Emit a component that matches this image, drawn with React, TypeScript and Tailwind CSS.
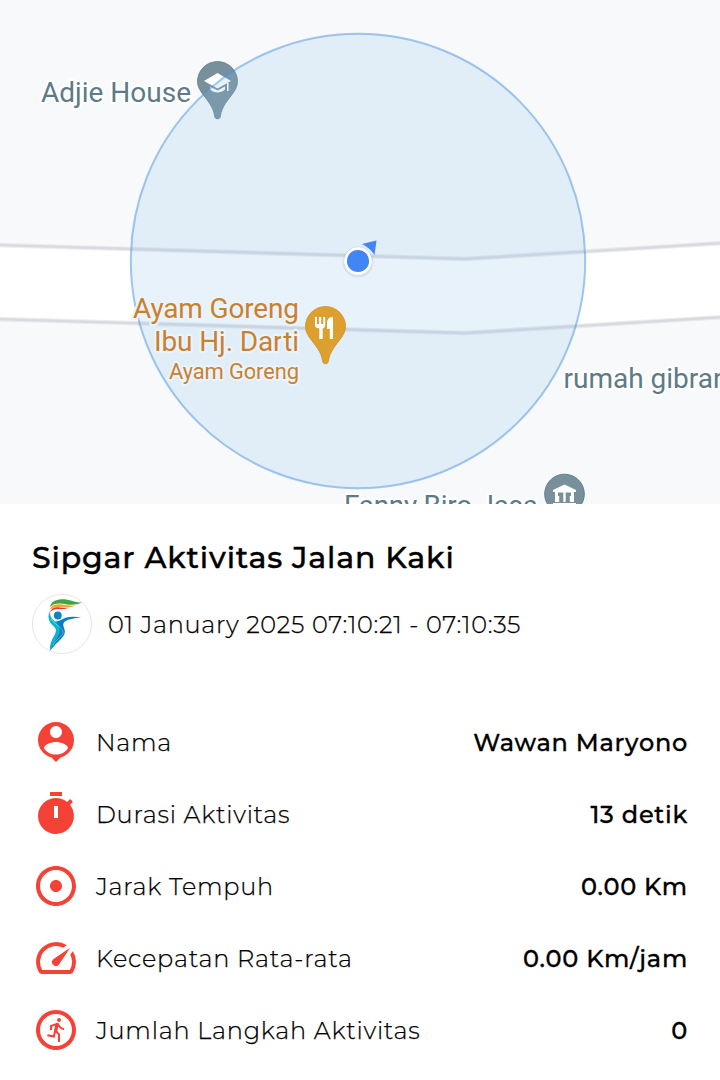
import React from "react";
import { MdAdjust, MdOutlineRunCircle, MdSpeed } from "react-icons/md";

type RowProps = {
  icon: React.ReactNode;
  label: string;
  value: string;
};

const PersonIcon = () => (
  <svg viewBox="0 0 24 24" className="size-12" fill="currentColor">
    <path d="M12 2C7.03 2 3 6.03 3 11c0 4.17 2.84 7.67 6.69 8.69L12 22l2.31-2.31C18.16 18.67 21 15.17 21 11c0-4.97-4.03-9-9-9zm0 2c1.66 0 3 1.34 3 3s-1.34 3-3 3-3-1.34-3-3 1.34-3 3-3zm0 14.3c-2.5 0-4.71-1.28-6-3.22.03-1.99 4-3.08 6-3.08s5.97 1.09 6 3.08a7.2 7.2 0 0 1-6 3.22z" />
  </svg>
);

const TimerIcon = () => (
  <svg viewBox="0 0 24 24" className="size-12" fill="currentColor">
    <path d="M9 1h6v2H9zM19.03 7.39l1.42-1.42c-.43-.51-.9-.99-1.41-1.41l-1.42 1.42A8.96 8.96 0 0 0 12 4c-4.97 0-9 4.03-9 9s4.02 9 9 9a8.99 8.99 0 0 0 7.03-14.61zM13 14h-2V8h2v6z" />
  </svg>
);

const Logo = () => (
  <svg viewBox="0 0 60 60" className="size-15 shrink-0">
    <circle cx="30" cy="30" r="29.6" fill="#fff" stroke="#dedede" strokeWidth=".8" />
    <path d="M18 13C19 7 25 5 32 5.200c7 .5 11 3.500 18 3.300-7 3.500-14 2-20 1.200-6-.5-9 .5-12 3.300z" fill="#43a447" />
    <path d="M18 15.500c1.500-5 7-5.500 12-5 5 .6 8 1.500 13 1-5 3-10 1.500-15 1.500-5-.3-7 .5-10 2.500z" fill="#f5a52a" />
    <path d="M18 18c1.500-4.500 6-5 10-4.600 3 .2 5 .8 8 .8-4 1.500-7 .6-10.500.8-3 0-5.500 1-7.500 3z" fill="#e53935" />
    <path d="M18 17c-3 6-1.500 11 4 15.500 3 3 2 6 0 9.500-2.500 4.500-4.500 8.500-4 15 2-6 8-10.500 11-15.500 3-5 2-8.500-3-12-5.500-3.500-8.500-6.500-8-12.500z" fill="#08b7cb" />
    <path d="M23 27.500c4 0 6.500-2.500 10.500-3.800 5-1.300 10-1.300 16 .1-6 .2-12.500.9-17 3.900-2.500 2.500-.5 5.500.3 8.500 1 7-6.800 10-14.800 20.500 2-6 5-9.500 8-14.500 3-5.500 2-10.500-3-14.700z" fill="#087fc0" />
    <circle cx="25.800" cy="21.500" r="3.900" fill="#0d83c5" />
    <path d="M19 25c3 5 12 8.500 12 13.500 0 4-8 7.500-10 13" fill="none" stroke="#fff" strokeOpacity=".6" strokeWidth=".6" />
  </svg>
);

const PIN =
  "M0-20.500A20 20 0 0 0-20-.5C-20 9-11 15-5.800 25-3.500 29.500-3.300 32-2.500 35.500-2 37.200 2 37.200 2.500 35.500 3.300 32 3.500 29.500 5.800 25 11 15 20 9 20-.5A20 20 0 0 0 0-20.500z";

const ActivityMap = () => (
  <svg viewBox="0 0 720 504" className="block h-[504px] w-full shrink-0 bg-[#f8f9fb] tracking-normal">
    <path d="M0 245L465 259 720 243V317L465 333 0 319z" fill="#fff" />
    <g fill="none" stroke="#d5d6dc" strokeOpacity=".45" strokeWidth="4.600">
      <path d="M-4 245L130 249 465 259 724 243" />
      <path d="M-4 319L130 323 465 333 724 317" />
    </g>
    <g fill="none" stroke="#d5d6dc" strokeOpacity=".8" strokeWidth="2.400">
      <path d="M-4 245L130 249 465 259 724 243" />
      <path d="M-4 319L130 323 465 333 724 317" />
    </g>

    <g transform="translate(217.5 82)">
      <path d={PIN} fill="#78909c" stroke="#607d8b" strokeWidth=".8" />
      <path d="M-13.500-1L0-9 13.500-1 0 6.500z" fill="#fff" />
      <path d="M-7.500 4.500L0 8.500 7.500 4.500V7.500C3.500 11.500-3.500 11.500-7.500 7.500zM9.500 1h1.600v8h-1.600z" fill="#fff" />
    </g>

    <circle cx="358" cy="261" r="227.2" fill="#87beeb" fillOpacity=".2" stroke="#4a94e0" strokeOpacity=".5" strokeWidth="2" />

    <g transform="translate(325.5 327)">
      <path d={PIN} fill="#dda02f" stroke="#cf9029" strokeWidth=".8" />
      <path d="M-10.500-10h2v7h2v-7h2.200v7h2v-7h2v8c0 2-1 3-2.500 3.600V12h-3.400V1.600C-9.500 1-10.500 0-10.500-2zM7.500-10V12H4.300V2H1.500V-4C1.500-8 4-10 7.500-10z" fill="#fff" />
    </g>

    <g transform="translate(564.5 494)">
      <circle r="19.800" fill="#78909c" stroke="#607d8b" />
      <path d="M-11.500-4L0-9.500 11.500-4V-2H-11.500zM-9.500-2h3V8h-3zM6.500-2h3V8h-3zM-7-2H7V-1.500H-7zM-11.500 9h23v2h-23z" fill="#fff" />
      <path d="M-1.200-2h2.400V8h-2.400zM-6.500 2h1.200V8h-1.200zM5.300 2h1.200V8H5.300z" fill="#fff" />
    </g>

    {/* place labels */}
    <g
      fontFamily="Roboto, sans-serif"
      fontSize="28"
      fill="#5c7a87"
      stroke="#fff"
      strokeWidth="4.500"
      strokeLinejoin="round"
      paintOrder="stroke"
    >
      <text x="41" y="102" textLength="150">Adjie House</text>
      <text x="563.500" y="388">rumah gibran</text>
      <text x="344" y="515" textLength="194">Fanny Biro Jasa</text>
      <g fill="#cb8030" stroke="#e9f4fc" textAnchor="end">
        <text x="299" y="318" textLength="166">Ayam Goreng</text>
        <text x="299" y="351" textLength="145">Ibu Hj. Darti</text>
        <text x="299" y="379" fontSize="22" textLength="130">Ayam Goreng</text>
      </g>
    </g>

    {/* current position */}
    <path d="M362 244L376.500 240.500 374.500 255Q370 248 362 244z" fill="#4285f4" />
    <circle cx="358" cy="262" r="15.500" fill="#64748b" fillOpacity=".12" />
    <circle cx="358" cy="261" r="12.400" fill="#4285f4" stroke="#fff" strokeWidth="2.600" />
  </svg>
);

const Row: React.FC<RowProps> = ({ icon, label, value }) => {
  return (
    <div className="flex h-[72px] items-center">
      <span className="shrink-0 text-[#f44336]">{icon}</span>
      <p className="ml-4 pt-px whitespace-nowrap font-light [-webkit-text-stroke:0.25px]">{label}</p>
      <p className="ml-auto pt-px whitespace-nowrap font-medium [-webkit-text-stroke:0.3px]">{value}</p>
    </div>
  );
};

const App = () => {
  return (
    <div className="flex h-[1080px] w-[720px] flex-col overflow-hidden bg-white font-['Montserrat',sans-serif] tracking-[0.7px] text-black">
      <ActivityMap />
      <div className="px-8 pt-8">
        <h1 className="whitespace-nowrap text-[30px] leading-[44px] font-medium tracking-[0.85px] [-webkit-text-stroke:0.4px]">
          Sipgar Aktivitas Jalan Kaki
        </h1>
        <div className="mt-3.5 flex items-center gap-4">
          <Logo />
          <p className="pt-px whitespace-nowrap text-[24px] font-light [-webkit-text-stroke:0.25px]">
            01 January 2025 07:10:21 - 07:10:35
          </p>
        </div>
      </div>
      <div className="mt-[52px] px-8 text-[24px] leading-8 tracking-[0.75px]">
        <Row icon={<PersonIcon />} label="Nama" value="Wawan Maryono" />
        <Row icon={<TimerIcon />} label="Durasi Aktivitas" value="13 detik" />
        <Row icon={<MdAdjust size={48} />} label="Jarak Tempuh" value="0.00 Km" />
        <Row icon={<MdSpeed size={48} />} label="Kecepatan Rata-rata" value="0.00 Km/jam" />
        <Row icon={<MdOutlineRunCircle size={48} />} label="Jumlah Langkah Aktivitas" value="0" />
      </div>
    </div>
  );
};

export default App;
